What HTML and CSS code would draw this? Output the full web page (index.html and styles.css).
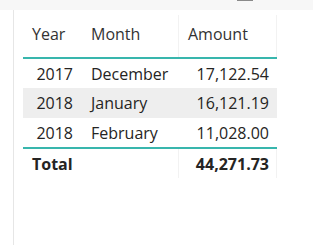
FILE: index.html
```html
<!DOCTYPE html>
<html>
<head>
<meta charset="utf-8">
<link rel="stylesheet" href="styles.css">
</head>
<body>
<div class="topbar"><span class="grip"></span></div>
<div class="frame">
  <div class="table">
    <div class="row head">
      <div class="cell c-year">Year</div>
      <div class="cell c-month">Month</div>
      <div class="cell c-amt sep">Amount</div>
    </div>
    <div class="row">
      <div class="cell c-year num">2017</div>
      <div class="cell c-month">December</div>
      <div class="cell c-amt num">17,122.54</div>
    </div>
    <div class="row alt">
      <div class="cell c-year num">2018</div>
      <div class="cell c-month">January</div>
      <div class="cell c-amt num">16,121.19</div>
    </div>
    <div class="row">
      <div class="cell c-year num">2018</div>
      <div class="cell c-month">February</div>
      <div class="cell c-amt num">11,028.00</div>
    </div>
    <div class="row total">
      <div class="cell c-year">Total</div>
      <div class="cell c-month"></div>
      <div class="cell c-amt num sep">44,271.73</div>
    </div>
  </div>
</div>
</body>
</html>
```
FILE: styles.css
```css
html, body {
  margin: 0;
  padding: 0;
  background: #ffffff;
}
body {
  font-family: "Open Sans", "Noto Sans", sans-serif;
  font-size: 16px;
  color: #252423;
  width: 313px;
  height: 246px;
  overflow: hidden;
}
.topbar {
  height: 10px;
  background: #f7f7f7;
  position: relative;
}
.grip {
  position: absolute;
  left: 237px;
  top: 0;
  width: 16px;
  height: 1px;
  background: #8a8a8a;
}
.frame {
  margin-left: 13px;
  border-left: 1px solid #e6e6e6;
  height: 235px;
  padding: 5px 0 0 9px;
  box-sizing: border-box;
}
.table {
  width: 254px;
  display: flex;
  flex-direction: column;
}
.row {
  display: grid;
  grid-template-columns: 59px 96px 99px;
  height: 29px;
  align-items: center;
}
.row.alt {
  background: #eeeeee;
  height: 30px;
}
.cell {
  padding: 0 9px;
  white-space: nowrap;
  line-height: 20px;
}
.c-amt {
  padding: 0 8px 0 10px;
}
.num {
  text-align: right;
}
.head {
  height: 42px;
  align-items: stretch;
  color: #333333;
  border-bottom: 2px solid #38b6ad;
}
.head .cell {
  padding-top: 9px;
}
.head .c-amt {
  border-left: 1px solid #f2f2f2;
  border-right: 1px solid #f2f2f2;
  padding-left: 9px;
}
.total {
  border-top: 2px solid #38b6ad;
  height: 29px;
  font-weight: 700;
  align-items: stretch;
}
.total .cell {
  display: flex;
  align-items: center;
}
.total .c-amt {
  justify-content: flex-end;
  border-left: 1px solid #f2f2f2;
  border-right: 1px solid #f2f2f2;
  padding-left: 9px;
  padding-right: 7px;
}
```
